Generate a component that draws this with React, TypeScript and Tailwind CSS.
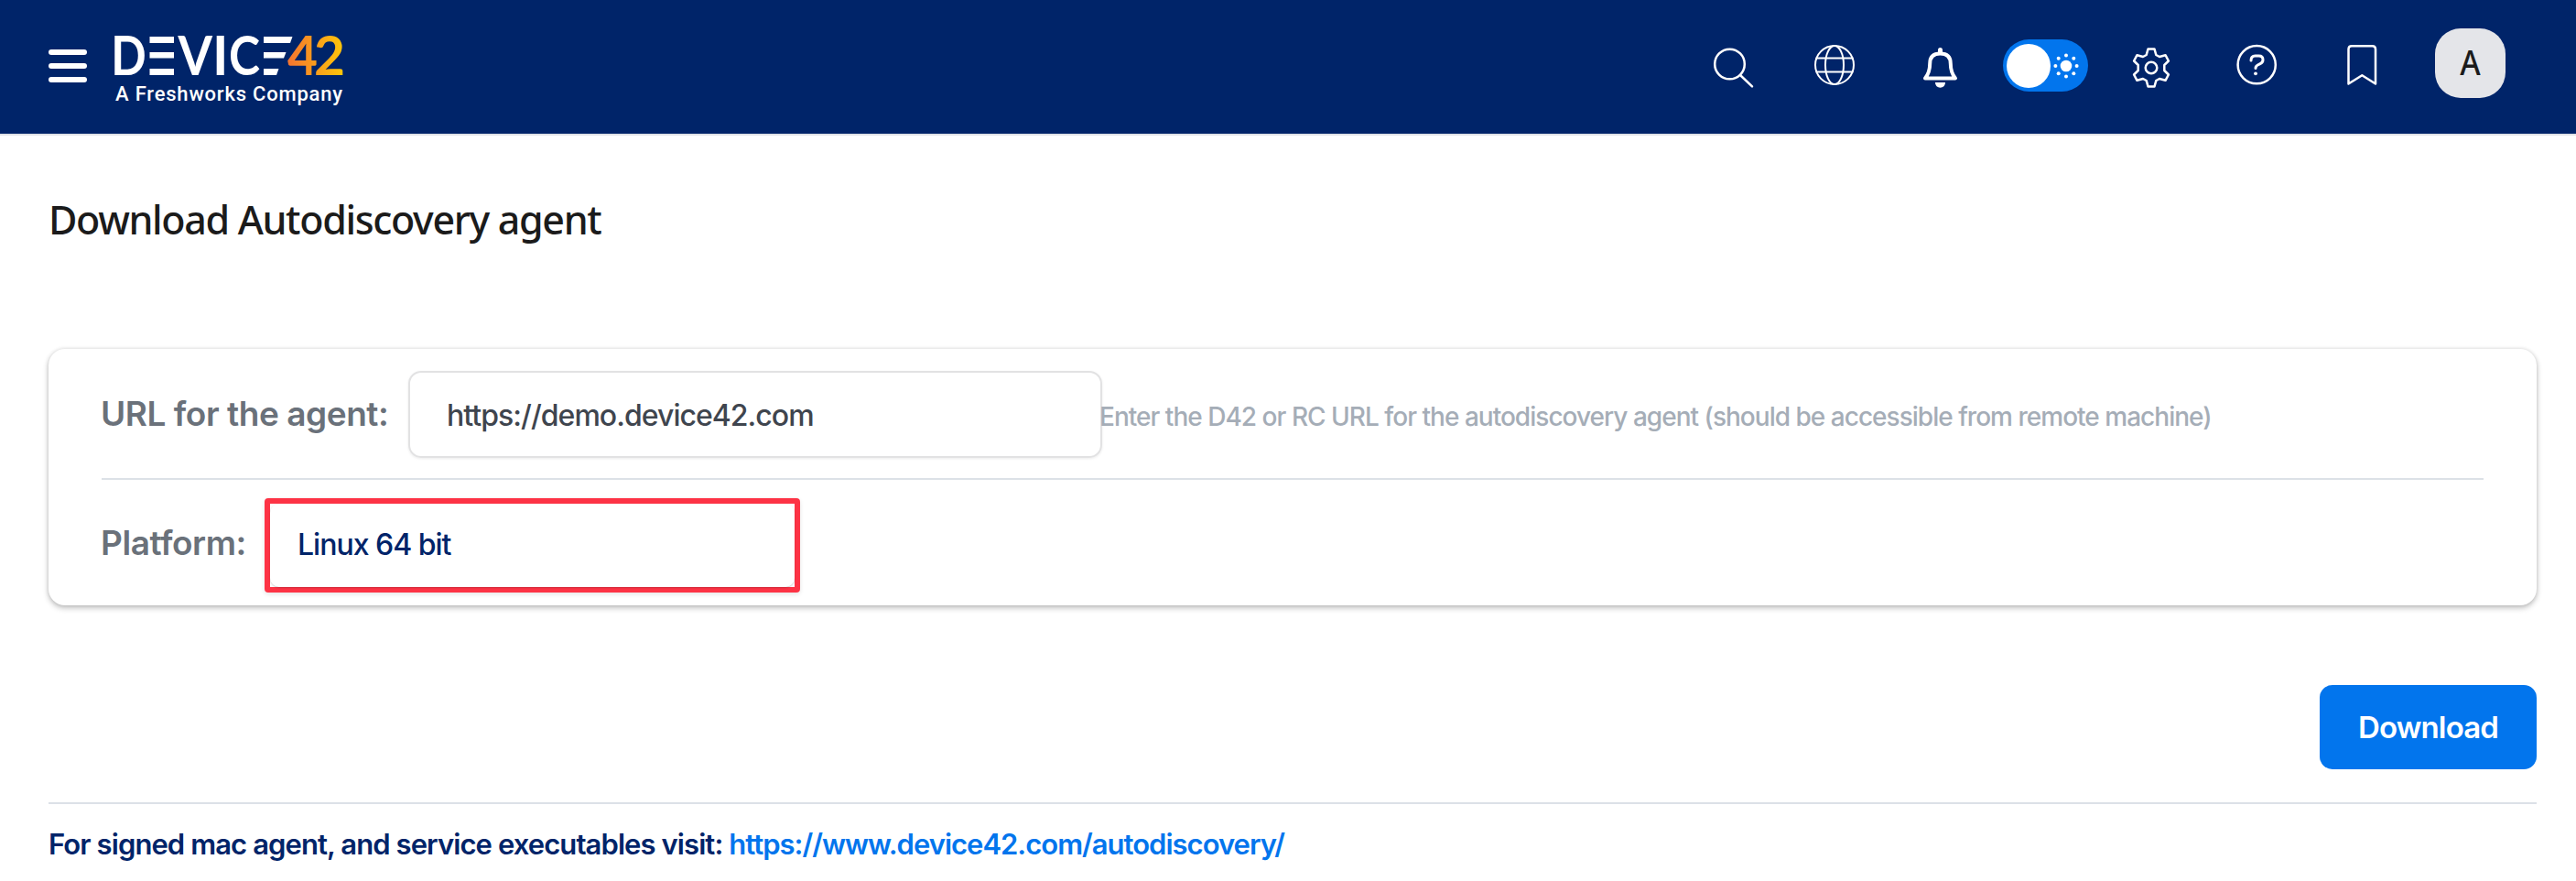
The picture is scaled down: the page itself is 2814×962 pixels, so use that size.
import type { ReactNode } from "react";

function Logo() {
  return (
    <svg
      className="ml-[28px] mt-[36px] h-[52px] w-[256px] shrink-0 overflow-visible"
      viewBox="123 36 256 52"
      role="img"
      aria-label="DEVICE42"
    >
      <defs>
        <linearGradient id="d42" gradientUnits="userSpaceOnUse" x1="315" y1="60" x2="375" y2="60">
          <stop offset="0" stopColor="#f4752f" />
          <stop offset="1" stopColor="#ffc60a" />
        </linearGradient>
      </defs>
      <g fontFamily="Lato, sans-serif" fontWeight="700" fontSize="59" fill="#fff">
        <text x="121.2" y="82" textLength="38.5" lengthAdjust="spacingAndGlyphs">D</text>
        <text x="194.5" y="82" textLength="37.5" lengthAdjust="spacingAndGlyphs">V</text>
        <text x="232" y="82">I</text>
        <text x="250" y="82" textLength="34" lengthAdjust="spacingAndGlyphs">C</text>
        <text x="314" y="82" textLength="33" lengthAdjust="spacingAndGlyphs" fill="url(#d42)">4</text>
        <text x="343" y="82" textLength="34" lengthAdjust="spacingAndGlyphs" fill="url(#d42)">2</text>
      </g>
      <g fill="#fff">
        <rect x="163.5" y="40" width="26.5" height="7" />
        <rect x="163.5" y="57" width="26.5" height="6.5" />
        <rect x="163.5" y="75" width="26.5" height="7" />
        <polygon points="288,40 319.5,40 317,47 288,47" />
        <polygon points="288,57 312.5,57 310,63.5 288,63.5" />
        <polygon points="288,75 304.5,75 302,82 288,82" />
      </g>
    </svg>
  );
}

function Icon({ className, children }: { className: string; children: ReactNode }) {
  return (
    <svg
      className={`h-11 w-11 shrink-0 overflow-visible ${className}`}
      viewBox="0 0 44 44"
      fill="none"
      stroke="#fff"
      strokeWidth="2.5"
      strokeLinecap="round"
      strokeLinejoin="round"
    >
      {children}
    </svg>
  );
}

function Header() {
  return (
    <header className="flex h-[148px] items-start border-b-2 border-[#dfe1e6] bg-[#002469] pl-[53px] pr-[77px]">
      <button className="mt-[54px] flex w-[42px] shrink-0 flex-col gap-[9px]" aria-label="Menu">
        <span className="h-[6px] w-full rounded-full bg-white" />
        <span className="h-[6px] w-full rounded-full bg-white" />
        <span className="h-[6px] w-full rounded-full bg-white" />
      </button>
      <div className="flex flex-col">
        <Logo />
        <span className="ml-[31px] mt-[1px] whitespace-nowrap font-['Roboto'] text-[22px] font-medium leading-[28px] tracking-[0.8px] text-white">
          A Freshworks Company
        </span>
      </div>
      <nav className="ml-auto flex items-start">
        <Icon className="mt-[52px]">
          <circle cx="17.5" cy="18" r="16.3" />
          <path d="M29.5 30.5 42 42.3" />
        </Icon>
        <Icon className="ml-[66px] mt-[48.5px]">
          <g strokeWidth="2">
            <circle cx="22" cy="22" r="21" />
            <ellipse cx="22" cy="22" rx="10" ry="21" />
            <path d="M2.5 14.5h39M2.5 29.5h39" />
          </g>
        </Icon>
        <Icon className="ml-[71px] mt-[52px]">
          <path
            strokeWidth="4"
            d="M6 33.5C10 28.5 11.2 24 11.2 17.5 11.2 10 15.5 6.5 22.5 6.5S33.8 10 33.8 17.5c0 6.500 1.200 11 5.200 16Z"
          />
          <path strokeWidth="5" d="M22.500 2.500v3" />
          <path fill="#fff" stroke="none" d="M17 38h11c0 3.500-2.500 5.700-5.500 5.700S17 41.500 17 38Z" />
        </Icon>
        <button
          className="ml-[47px] mt-[43px] flex h-[57px] w-[93px] shrink-0 items-center rounded-full bg-[#0275ed] pl-1"
          aria-label="Theme"
        >
          <span className="h-12 w-12 shrink-0 rounded-full bg-white" />
          <svg className="ml-[2px] h-[30px] w-[30px] shrink-0" viewBox="-15 -15 30 30" fill="#fff">
            <circle r="6.300" />
            <circle cx="0" cy="-11.600" r="2" />
            <circle cx="8.300" cy="-8.300" r="2" />
            <circle cx="11.600" cy="0" r="2" />
            <circle cx="8.300" cy="8.300" r="2" />
            <circle cx="0" cy="11.600" r="2" />
            <circle cx="-8.300" cy="8.300" r="2" />
            <circle cx="-11.600" cy="0" r="2" />
            <circle cx="-8.300" cy="-8.300" r="2" />
          </svg>
        </button>
        <Icon className="ml-[47px] mt-[52px]">
          <circle cx="22" cy="22" r="6.300" />
          <path d="M18.500 1.500h7l1.800 6.500 3.700 2 6.500-1.800 3.400 6.300-4.600 4.500v6l4.600 4.500-3.400 6.300-6.500-1.800-3.700 2-1.800 6.500h-7l-1.800-6.500-3.700-2-6.500 1.800-3.400-6.300 4.600-4.500v-6l-4.600-4.500 3.400-6.300 6.500 1.800 3.700-2Z" />
        </Icon>
        <Icon className="ml-[71px] mt-[49px]">
          <circle cx="22.200" cy="21.700" r="20.600" />
          <path
            strokeWidth="3"
            d="M16 17c0-3.500 1.500-5 4.500-5h4c3 0 4.500 1.500 4.500 4.200 0 2.200-1 3.600-3 4.500l-2.700 1.300c-1.800.9-2.300 1.800-2.300 3.500"
          />
          <circle cx="21" cy="31.300" r="1.900" fill="#fff" stroke="none" />
        </Icon>
        <Icon className="ml-[71px] mt-[49px]">
          <path d="M7.500 42.500V4.500a3.500 3.500 0 0 1 3.500-3.300h22.500a3.500 3.500 0 0 1 3.500 3.300v38L22.300 33.300Z" />
        </Icon>
        <div className="ml-[58px] mt-[31px] flex h-[76px] w-[77px] shrink-0 items-center justify-center rounded-[28px] bg-[#e4e5e9]">
          <span className="inline-block scale-x-90 pb-[4px] font-['Noto_Sans'] text-[38px] font-medium leading-[72px] text-[#1b1b1b]">
            A
          </span>
        </div>
      </nav>
    </header>
  );
}

export default function App() {
  return (
    <div className="h-[962px] w-[2814px] overflow-hidden bg-white font-['Inter',sans-serif]">
      <Header />
      <main className="flex flex-col pl-[53px] pr-[43px]">
        <h1 className="mt-[62px] whitespace-nowrap font-['Noto_Sans'] text-[43px] font-medium leading-[60px] tracking-[-1.35px] text-[#1b1b1b]">
          Download Autodiscovery agent
        </h1>
        <section className="mt-[111px] flex h-[280px] flex-col rounded-[18px] bg-white px-[58px] shadow-[0_3px_6px_rgba(0,0,0,0.24),0_0_4px_rgba(0,0,0,0.12)]">
          <div className="flex h-[143px] shrink-0 items-start border-b-2 border-[#dce1e7]">
            <label className="-ml-[1px] w-[336px] shrink-0 whitespace-nowrap pt-[1px] text-[37px] font-semibold leading-[140px] tracking-[-0.45px] text-[#6a717a]">
              URL for the agent:
            </label>
            <div className="mt-[24px] flex h-[95px] w-[758px] shrink-0 items-center rounded-[14px] border-2 border-[#e2e2e3] pl-[40px] pt-[3px] text-[32px] font-medium tracking-[-0.97px] text-[#3f454e] shadow-[0_1px_3px_rgba(0,0,0,0.08)]">
              https://demo.device42.com
            </div>
            <span className="-ml-[3px] whitespace-nowrap pt-[4px] text-[28px] font-medium leading-[140px] tracking-[-0.98px] text-[#a5adb7]">
              Enter the D42 or RC URL for the autodiscovery agent (should be accessible from remote machine)
            </span>
          </div>
          <div className="flex items-start">
            <label className="-ml-[1px] w-[179px] shrink-0 whitespace-nowrap text-[37px] font-semibold leading-[137px] tracking-[-0.45px] text-[#6a717a]">
              Platform:
            </label>
            <div className="mt-[20px] h-[103px] w-[585px] rounded-[4px] border-[6px] border-[#fd3345] shadow-[0_2px_5px_rgba(0,0,0,0.1)]">
              <div className="flex h-full items-center rounded-[10px] pb-[2px] pl-[30px] text-[32px] font-medium tracking-[-1px] text-[#002469] shadow-[0_1px_2px_rgba(0,0,0,0.2)]">
                Linux 64 bit
              </div>
            </div>
          </div>
        </section>
        <button className="mt-[87px] h-[92px] w-[237px] self-end rounded-[14px] bg-[#0275ed] pt-[1px] text-[33px] font-semibold tracking-[-0.85px] text-white">
          Download
        </button>
        <p className="mt-[36px] whitespace-nowrap border-t-2 border-[#dce1e7] pt-[24px] text-[31px] font-semibold leading-[40px] tracking-[-0.91px] text-[#002469]">
          For signed mac agent, and service executables visit:{" "}
          <a className="tracking-[-1px] text-[#0275ed]">https://www.device42.com/autodiscovery/</a>
        </p>
      </main>
    </div>
  );
}
